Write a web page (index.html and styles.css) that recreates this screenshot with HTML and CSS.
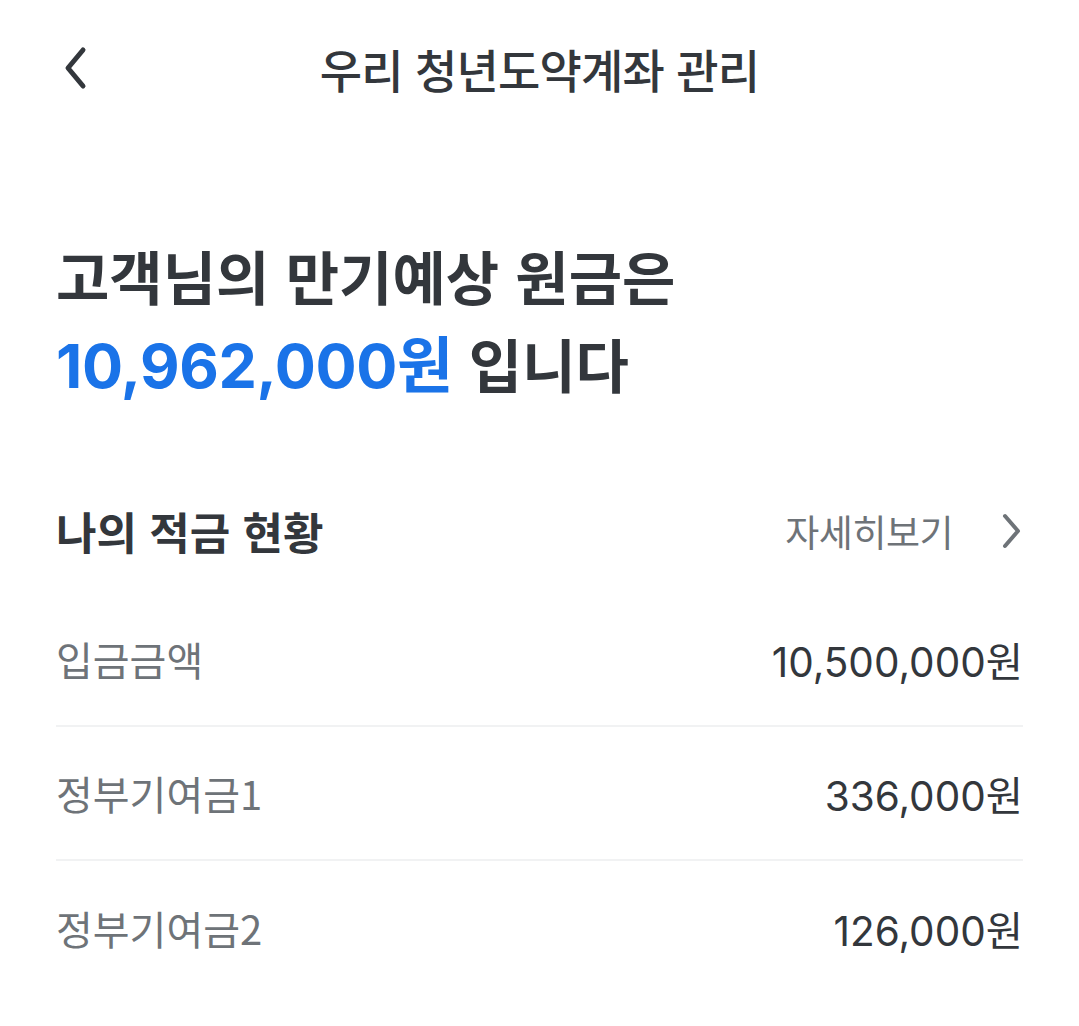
FILE: index.html
```html
<!DOCTYPE html>
<html lang="ko">
<head>
<meta charset="utf-8">
<title>우리 청년도약계좌 관리</title>
<link rel="stylesheet" href="styles.css">
</head>
<body>
<div class="page">
  <header class="topbar">
    <button class="back" aria-label="뒤로">
      <svg width="30" height="44" viewBox="0 0 30 44"><path d="M24 4 L9 22 L24 40" fill="none" stroke="#33373c" stroke-width="5" stroke-linecap="round" stroke-linejoin="round"/></svg>
    </button>
    <h1 class="title">우리 청년도약계좌 관리</h1>
    <span></span>
  </header>

  <section class="summary">
    <p class="summary-line">고객님의 만기예상 원금은</p>
    <p class="summary-line"><span class="amount">10,962,000원</span> 입니다</p>
  </section>

  <section class="status">
    <div class="status-head">
      <h2 class="status-title">나의 적금 현황</h2>
      <a class="more">자세히보기
        <svg width="24" height="36" viewBox="0 0 24 36"><path d="M6 3 L19 18 L6 33" fill="none" stroke="#6e7378" stroke-width="4" stroke-linecap="round" stroke-linejoin="round"/></svg>
      </a>
    </div>
    <ul class="rows">
      <li class="row"><span class="label">입금금액</span><span class="value">10,500,000원</span></li>
      <li class="row"><span class="label">정부기여금1</span><span class="value">336,000원</span></li>
      <li class="row"><span class="label">정부기여금2</span><span class="value">126,000원</span></li>
    </ul>
  </section>
</div>
</body>
</html>
```

FILE: styles.css
```css
* { box-sizing: border-box; }
html, body { margin: 0; padding: 0; background: #fff; }
body {
  font-family: "Noto Sans CJK KR", "Noto Sans", sans-serif;
  color: #33373c;
}
.page { padding: 0 56px; }

.topbar {
  height: 146px;
  padding-bottom: 10px;
  display: grid;
  grid-template-columns: 1fr auto 1fr;
  align-items: center;
}
.back {
  justify-self: start;
  background: none;
  border: 0;
  padding: 0;
  margin-left: 3px;
  display: flex;
}
.title {
  margin: 0;
  font-size: 46px;
  font-weight: 500;
  letter-spacing: -0.8px;
  color: #33373c;
}

.summary { margin-top: 85px; }
.summary-line {
  margin: 0;
  font-size: 58px;
  line-height: 88px;
  font-weight: 700;
  color: #33373c;
}
.amount {
  color: #1a73e8;
  font-family: "Inter", "Noto Sans CJK KR", sans-serif;
  font-size: 61px;
  letter-spacing: -0.4px;
}

.status { margin-top: 81px; }
.status-head {
  height: 80px;
  display: flex;
  align-items: center;
  justify-content: space-between;
}
.status-title {
  margin: 0;
  font-size: 44px;
  font-weight: 700;
  color: #33373c;
}
.more {
  display: flex;
  align-items: center;
  gap: 46px;
  font-size: 37px;
  color: #6e7378;
  letter-spacing: -0.5px;
}
.rows { list-style: none; margin: 22px 0 0; padding: 0; }
.row {
  height: 134px;
  display: flex;
  align-items: center;
  justify-content: space-between;
  border-bottom: 2px solid #f1f2f3;
}
.row:last-child { border-bottom: 0; }
.label {
  font-size: 40px;
  color: #6e7378;
}
.value {
  font-family: "Inter", "Noto Sans CJK KR", sans-serif;
  font-size: 40.5px;
  color: #33373c;
}
```
